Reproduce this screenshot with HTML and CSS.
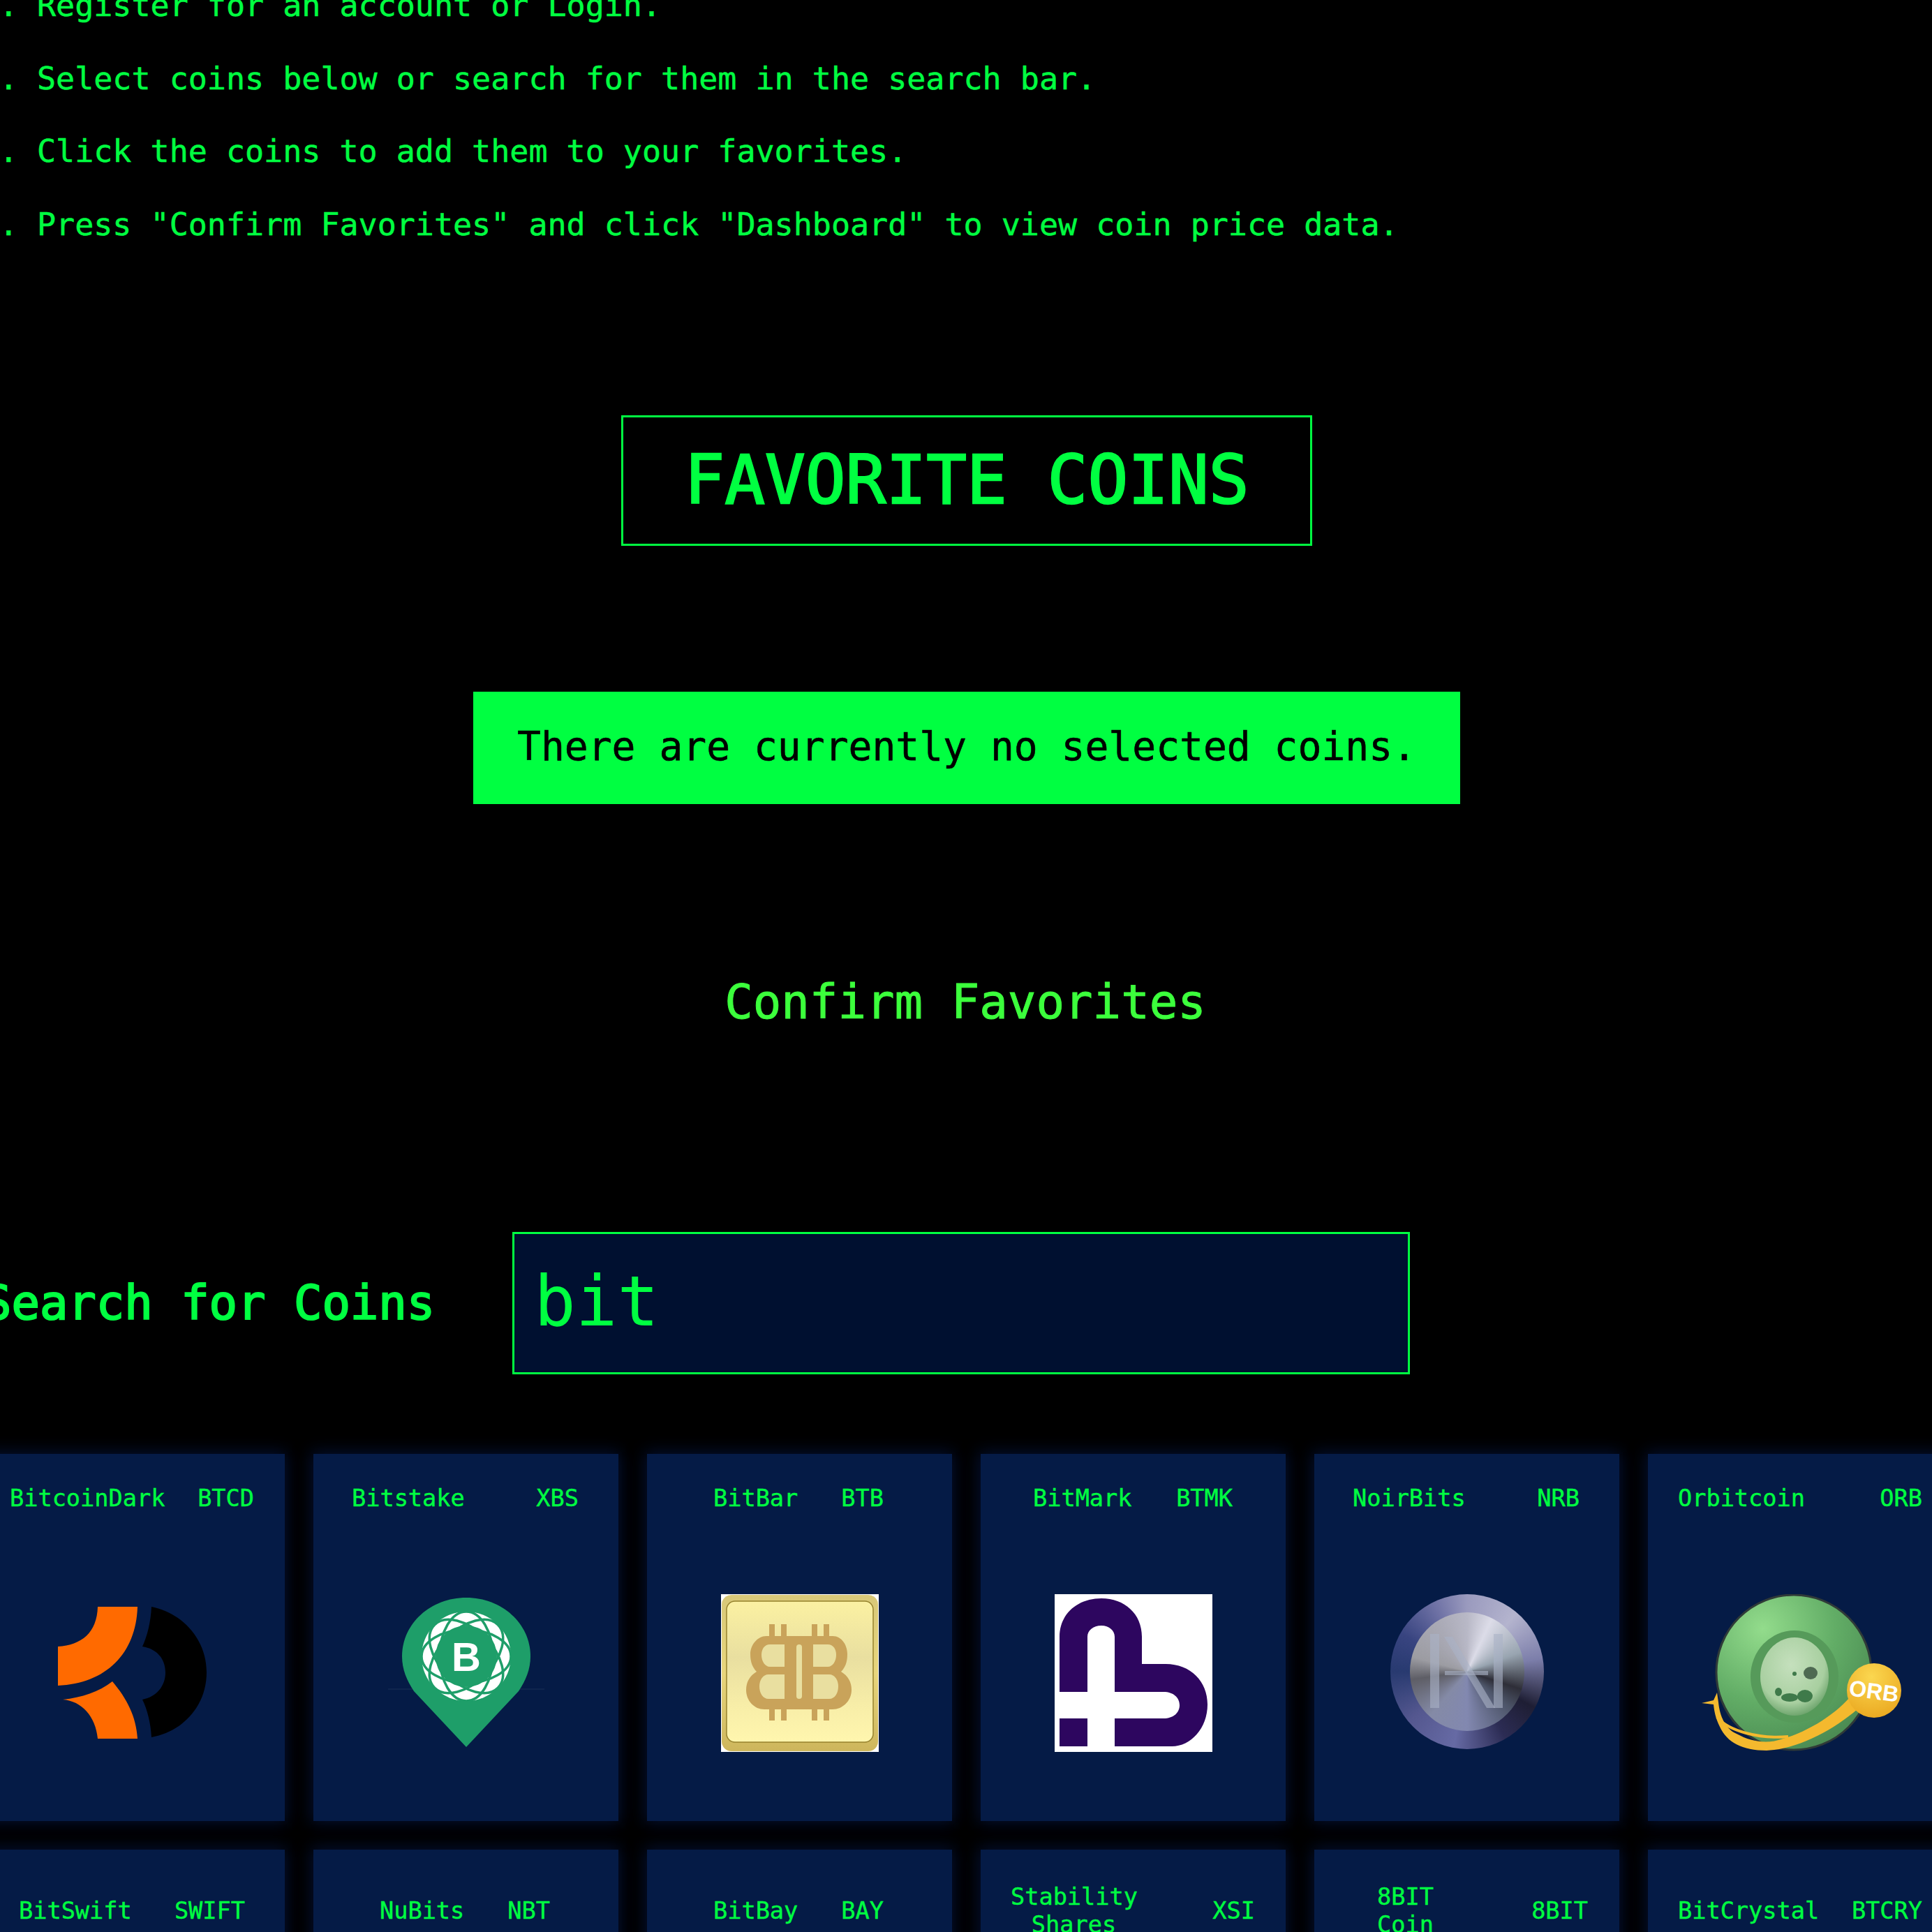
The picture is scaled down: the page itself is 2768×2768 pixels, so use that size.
FILE: index.html
```html
<!DOCTYPE html>
<html lang="en">
<head>
<meta charset="utf-8">
<title>Favorite Coins</title>
<link rel="stylesheet" href="styles.css">
</head>
<body>
<main class="page">
  <ol class="steps">
    <li>Register for an account or Login.</li>
    <li>Select coins below or search for them in the search bar.</li>
    <li>Click the coins to add them to your favorites.</li>
    <li>Press "Confirm Favorites" and click "Dashboard" to view coin price data.</li>
  </ol>

  <h1 class="fav-title">FAVORITE COINS</h1>
  <p class="notice">There are currently no selected coins.</p>
  <button class="confirm" type="button">Confirm Favorites</button>

  <form class="search">
    <label class="search-label" for="q">Search for Coins</label>
    <input class="search-input" id="q" type="text" value="bit">
  </form>

  <section class="grid">
    <article class="card">
      <div class="title pad-44"><span class="name">BitcoinDark</span><span class="sym">BTCD</span></div>
      <div class="logo">
        <svg class="img" viewBox="0 0 226 226" width="226" height="226">
          <path fill="#ff6a00" d="M63 18H120C118 85 75 128 6 131V75C40 73 62 55 63 18Z"/>
          <path fill="#ff6a00" d="M13 151C40 148 65 140 84 125C105 150 118 175 120 207H63C60 175 40 153 13 151Z"/>
          <path fill="#000" d="M140 18C185 27 219 65 219 112C219 160 185 197 140 205C139 185 134 165 127 151C147 147 160 132 160 112C160 92 147 78 127 75C134 60 139 40 140 18Z"/>
        </svg>
      </div>
    </article>

    <article class="card">
      <div class="title pad-56"><span class="name">Bitstake</span><span class="sym">XBS</span></div>
      <div class="logo">
        <svg class="img" viewBox="0 0 226 226" width="226" height="226">
          <path d="M1 136H225" stroke="#1b3056" stroke-width="1"/>
          <path fill="#1e9e69" d="M113 5C164 5 205 42 205 89C205 108 198 124 188 139L113 219L38 139C28 124 21 108 21 89C21 42 62 5 113 5Z"/>
          <circle cx="113" cy="89" r="64" fill="#fff"/>
          <g fill="none" stroke="#1e9e69" stroke-width="3.5">
            <ellipse cx="113" cy="89" rx="64" ry="38"/>
            <ellipse cx="113" cy="89" rx="64" ry="38" transform="rotate(45 113 89)"/>
            <ellipse cx="113" cy="89" rx="64" ry="38" transform="rotate(90 113 89)"/>
            <ellipse cx="113" cy="89" rx="64" ry="38" transform="rotate(135 113 89)"/>
          </g>
          <circle cx="113" cy="89" r="44" fill="#1e9e69"/>
          <text class="pin-b" x="113" y="110" text-anchor="middle">B</text>
        </svg>
      </div>
    </article>

    <article class="card">
      <div class="title pad-98"><span class="name">BitBar</span><span class="sym">BTB</span></div>
      <div class="logo">
        <svg class="img" viewBox="0 0 226 226" width="226" height="226">
          <defs>
            <linearGradient id="gold" x1="0" y1="0" x2="0" y2="1">
              <stop offset="0" stop-color="#d8c878"/>
              <stop offset=".5" stop-color="#e8d67c"/>
              <stop offset="1" stop-color="#cdb65c"/>
            </linearGradient>
            <linearGradient id="face" x1="0" y1="0" x2="0" y2="1">
              <stop offset="0" stop-color="#fbf1a2"/>
              <stop offset=".4" stop-color="#e9dfa0"/>
              <stop offset=".75" stop-color="#f8eea8"/>
              <stop offset="1" stop-color="#fff6ae"/>
            </linearGradient>
          </defs>
          <rect width="226" height="226" fill="#fff"/>
          <rect x="1" y="1" width="224" height="224" rx="14" fill="url(#gold)"/>
          <rect x="8" y="10" width="210" height="202" rx="12" fill="url(#face)" stroke="#96832e" stroke-width="1.5"/>
          <g fill="#c9a35a">
            <rect x="69" y="43" width="8" height="26"/><rect x="86" y="43" width="8" height="26"/>
            <rect x="130" y="43" width="8" height="26"/><rect x="147" y="43" width="8" height="26"/>
            <rect x="69" y="160" width="8" height="21"/><rect x="86" y="160" width="8" height="21"/>
            <rect x="130" y="160" width="8" height="21"/><rect x="147" y="160" width="8" height="21"/>
            <path d="M65 60H160C173 60 181 73 181 86C181 97 178 105 172 111C182 117 187 126 187 137C187 153 174 165 160 165H62C48 165 36 153 36 137C36 126 41 117 51 111C45 105 42 97 42 86C42 73 52 60 65 60Z"/>
          </g>
          <g fill="#e9dfa0">
            <path d="M91 72H70C62 72 58 79 58 87C58 96 63 104 70 104H91Z"/>
            <path d="M132 72H153C161 72 165 79 165 87C165 96 160 104 153 104H132Z"/>
            <path d="M91 115H68C60 115 55 123 55 132C55 142 60 150 68 150H91Z"/>
            <path d="M132 115H155C163 115 168 123 168 132C168 142 163 150 155 150H132Z"/>
            <rect x="108" y="72" width="8" height="78" rx="4"/>
          </g>
        </svg>
      </div>
    </article>

    <article class="card">
      <div class="title pad-76"><span class="name">BitMark</span><span class="sym">BTMK</span></div>
      <div class="logo">
        <svg class="img" viewBox="0 0 226 226" width="226" height="226">
          <rect width="226" height="226" fill="#fff"/>
          <path fill="#2d065f" d="M7 140V61C7 28 33 6 67 6C100 6 125 28 125 61V100H159C195 100 219 125 219 158C219 192 195 218 168 218H86V178H156C170 178 179 170 179 159C179 148 170 140 156 140H86V61C86 52 78 45 67 45C55 45 47 52 47 61V140Z"/>
          <rect x="7" y="178" width="40" height="40" fill="#2d065f"/>
        </svg>
      </div>
    </article>

    <article class="card">
      <div class="title pad-56"><span class="name">NoirBits</span><span class="sym">NRB</span></div>
      <div class="logo">
        <div class="noir">
          <div class="noir-face">
            <svg viewBox="0 0 164 170" width="164" height="170">
              <g fill="#aab2c6" fill-opacity=".6">
                <path d="M29 31H42V137H29Z"/>
                <path d="M49 35H61L122 137H110Z"/>
                <path d="M120 31H133V137H120Z"/>
                <path d="M50 84H112V90H50Z"/>
              </g>
            </svg>
          </div>
        </div>
      </div>
    </article>

    <article class="card">
      <div class="title pad-44"><span class="name">Orbitcoin</span><span class="sym">ORB</span></div>
      <div class="logo">
        <svg class="img" viewBox="0 0 288 226" width="288" height="226">
          <defs>
            <radialGradient id="orb-disc" cx=".3" cy=".22" r=".85">
              <stop offset="0" stop-color="#93dc8c"/>
              <stop offset=".55" stop-color="#62ad66"/>
              <stop offset="1" stop-color="#4a8a52"/>
            </radialGradient>
            <radialGradient id="orb-moon" cx=".45" cy=".35" r=".7">
              <stop offset="0" stop-color="#c5e0bd"/>
              <stop offset=".7" stop-color="#a8cfa0"/>
              <stop offset="1" stop-color="#5f9a60"/>
            </radialGradient>
            <radialGradient id="orb-ball" cx=".45" cy=".25" r=".8">
              <stop offset="0" stop-color="#fbd750"/>
              <stop offset="1" stop-color="#eaa71f"/>
            </radialGradient>
          </defs>
          <ellipse cx="134" cy="112" rx="111" ry="111" fill="url(#orb-disc)" stroke="#2f3a38" stroke-width="3"/>
          <ellipse cx="135" cy="118" rx="63" ry="66" fill="#569a5a"/>
          <ellipse cx="135" cy="118" rx="49" ry="56" fill="url(#orb-moon)"/>
          <g fill="#3f7a4a">
            <ellipse cx="158" cy="113" rx="10" ry="9" fill="#4e6a52"/>
            <ellipse cx="128" cy="148" rx="12" ry="6"/>
            <ellipse cx="150" cy="146" rx="11" ry="9"/>
            <circle cx="135" cy="114" r="3"/>
            <ellipse cx="112" cy="140" rx="5" ry="6"/>
          </g>
          <path fill="#f4b92e" d="M225 165C190 195 140 222 95 224C60 224 38 212 28 190C22 178 20 168 19 158L2 156L19 152L24 141L26 155C28 175 36 193 52 200C70 210 90 214 108 210C150 200 190 175 214 148Z"/>
          <path fill="none" stroke="#f4b92e" stroke-width="4" d="M24 176C40 196 85 208 126 204"/>
          <ellipse cx="249" cy="138" rx="39" ry="39" fill="url(#orb-ball)"/>
          <text class="orb-text" x="249" y="150" text-anchor="middle" transform="rotate(8 249 138)">ORB</text>
        </svg>
      </div>
    </article>

    <article class="card">
      <div class="title tall pad-57"><span class="name">BitSwift</span><span class="sym">SWIFT</span></div>
    </article>
    <article class="card">
      <div class="title tall pad-98"><span class="name">NuBits</span><span class="sym">NBT</span></div>
    </article>
    <article class="card">
      <div class="title tall pad-98"><span class="name">BitBay</span><span class="sym">BAY</span></div>
    </article>
    <article class="card">
      <div class="title tall pad-44"><span class="name wrap">Stability Shares</span><span class="sym">XSI</span></div>
    </article>
    <article class="card">
      <div class="title tall pad-eight"><span class="name wrap">8BIT Coin</span><span class="sym">8BIT</span></div>
    </article>
    <article class="card">
      <div class="title tall pad-44"><span class="name">BitCrystal</span><span class="sym">BTCRY</span></div>
    </article>
  </section>
</main>
</body>
</html>
```
FILE: styles.css
```css
* { box-sizing: border-box; }
html, body { margin: 0; padding: 0; background: #000; }
body { height: 2768px; overflow: hidden; }
.page {
  display: flex;
  flex-direction: column;
  align-items: center;
  padding-left: 2px;
  font-family: "DejaVu Sans Mono", "Liberation Mono", monospace;
  color: #00ff41;
}
.steps {
  align-self: stretch;
  margin: -44px 0 0;
  padding: 0 0 0 51px;
  font-size: 45px;
  line-height: 104.7px;
  -webkit-text-stroke: .5px #00ff41;
}
.fav-title {
  margin: 220px 0 0;
  width: 990px;
  padding: 34px 0 35px;
  border: 3px solid #00ff41;
  font-size: 96px;
  line-height: 112px;
  font-weight: 400;
  text-align: center;
  -webkit-text-stroke: 2.4px #00ff41;
}
.notice {
  margin: 209px 0 0;
  width: 1414px;
  height: 161px;
  padding: 46px 0 0;
  background: #00ff41;
  color: #000;
  font-size: 56.3px;
  line-height: 65px;
  text-align: center;
  -webkit-text-stroke: .6px #000;
}
.confirm {
  margin: 245px 0 0 -4px;
  padding: 0;
  border: 0;
  background: none;
  color: #3cff3c;
  font: 67.4px/78px "DejaVu Sans Mono", monospace;
  -webkit-text-stroke: 1px #3cff3c;
}
.search {
  align-self: flex-start;
  display: flex;
  align-items: center;
  gap: 111px;
  margin: 290px 0 0 -26px;
}
.search-label {
  font-size: 67.2px;
  line-height: 78px;
  font-weight: 400;
  -webkit-text-stroke: 2.2px #00ff41;
}
.search-input {
  width: 1286px;
  height: 204px;
  padding: 0 28px 4px;
  border: 3px solid #00ff41;
  background: #001030;
  color: #00ff41;
  font: 99px "DejaVu Sans Mono", monospace;
  outline: 0;
}
.grid {
  align-self: flex-start;
  display: grid;
  grid-template-columns: repeat(6, 437px);
  grid-auto-rows: 526px;
  gap: 41px;
  margin: 114px 0 0 -31px;
}
.card {
  display: flex;
  flex-direction: column;
  background: #051b46;
  box-shadow: 0 0 22px 3px rgba(6, 22, 66, .75);
}
.title {
  display: flex;
  justify-content: space-between;
  align-items: center;
  min-height: 128px;
  font-size: 33.6px;
  line-height: 39.5px;
  -webkit-text-stroke: .4px #00ff41;
}
.title.tall { min-height: 176px; }
.pad-44 { padding: 0 44px 0 43px; }
.pad-56 { padding: 0 57px 0 55px; }
.pad-57 { padding: 0 57px 0 56px; }
.pad-76 { padding: 0 76px 0 75px; }
.pad-98 { padding: 0 98px 0 95px; }
.pad-eight { padding: 0 45px 0 40px; }
.name.wrap { width: 181px; text-align: center; }
.logo {
  display: flex;
  justify-content: center;
  margin-top: 73px;
}
.img { display: block; }
.pin-b {
  font: 700 58px "Liberation Sans", sans-serif;
  fill: #fff;
}
.orb-text {
  font: 700 32px "Liberation Sans", sans-serif;
  fill: #fff;
}
.noir {
  width: 220px;
  height: 222px;
  border-radius: 50%;
  display: flex;
  align-items: center;
  justify-content: center;
  background: conic-gradient(from 0deg, #9a9abe 0deg, #b4b4ce 40deg, #7c7eaa 80deg, #1e1e34 118deg, #2c2c54 150deg, #666aa4 190deg, #54578f 230deg, #283a70 270deg, #384480 300deg, #7073a6 335deg, #9a9abe 360deg);
}
.noir-face {
  width: 164px;
  height: 170px;
  border-radius: 50%;
  overflow: hidden;
  background: conic-gradient(from 0deg, #b8b8c6 0deg, #dcdce8 25deg, #98a4b0 70deg, #2e2e38 108deg, #4c5468 130deg, #8288b0 180deg, #848aa6 220deg, #5e5e66 262deg, #9c9ca2 285deg, #aaaab6 330deg, #b8b8c6 360deg);
}
.noir-face svg { display: block; }
```
